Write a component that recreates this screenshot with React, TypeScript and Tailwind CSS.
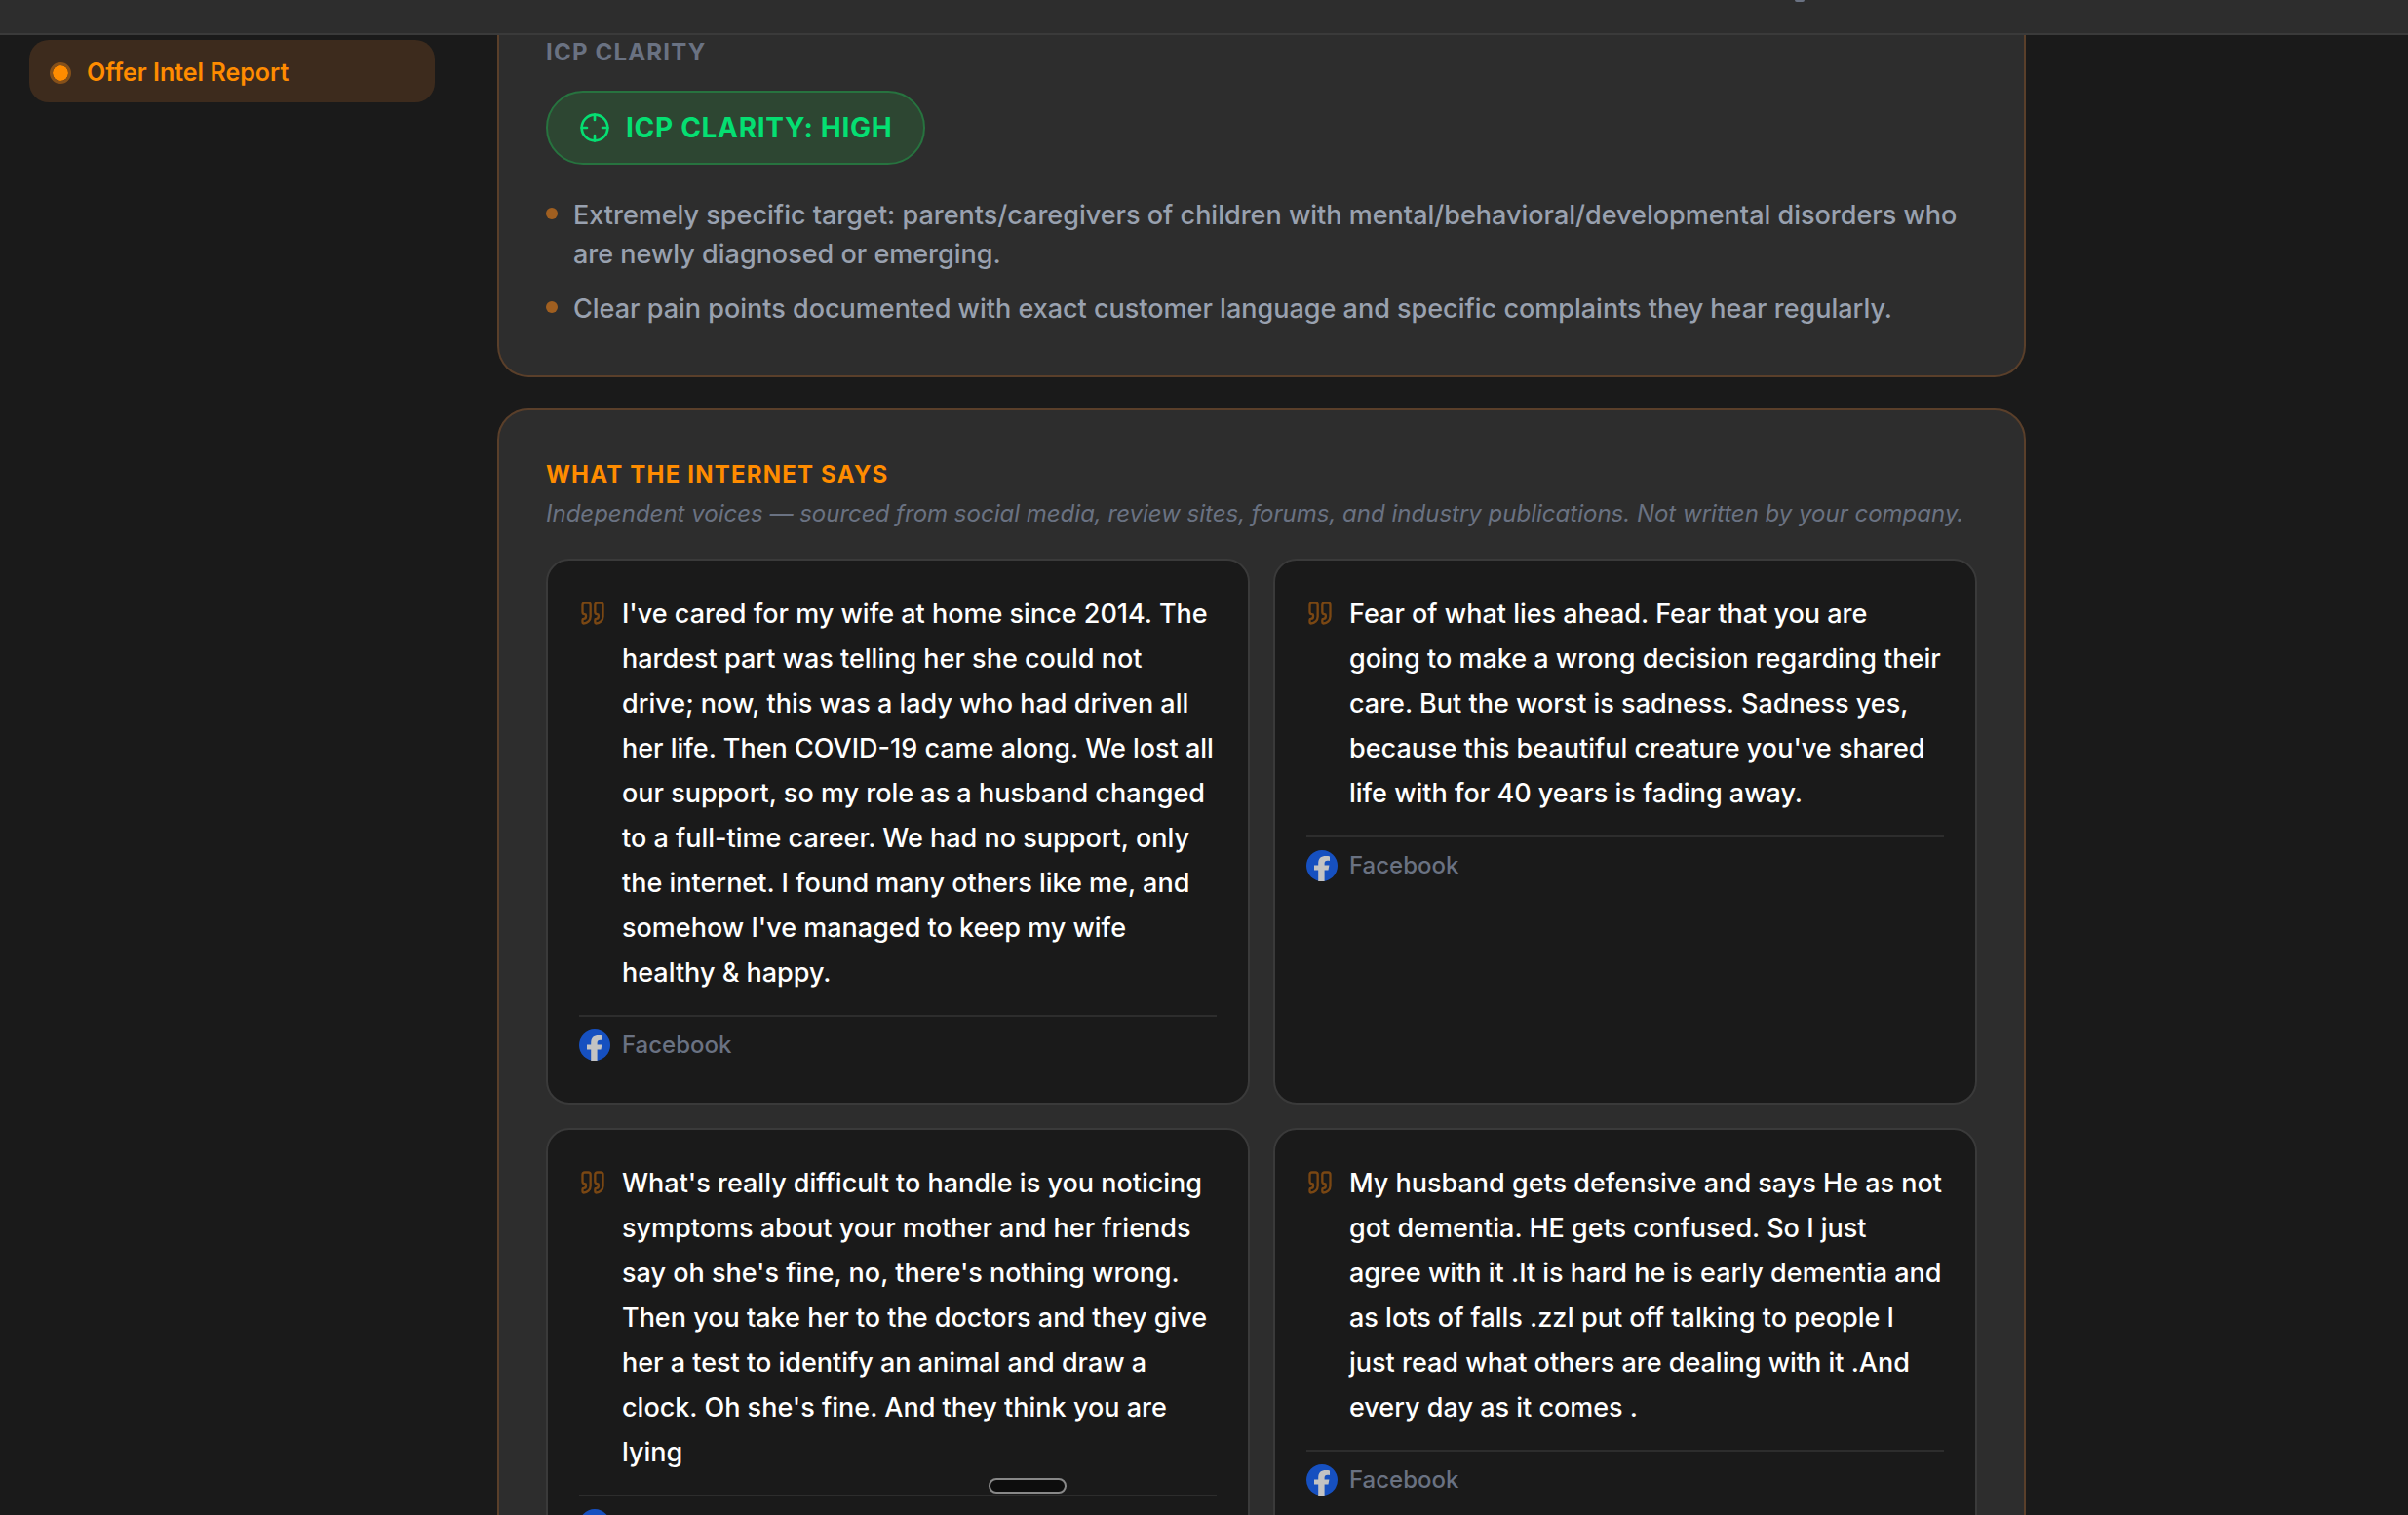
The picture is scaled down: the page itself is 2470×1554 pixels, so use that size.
import React from 'react'
import { Crosshair, Quote } from 'lucide-react'

interface Voice { lines: string[]; source: string }

const clarityPoints = [
  'Extremely specific target: parents/caregivers of children with mental/behavioral/developmental disorders who are newly diagnosed or emerging.',
  'Clear pain points documented with exact customer language and specific complaints they hear regularly.',
]

const voices: Voice[] = [
  {
    lines: [
      "I've cared for my wife at home since 2014. The",
      'hardest part was telling her she could not',
      'drive; now, this was a lady who had driven all',
      'her life. Then COVID-19 came along. We lost all',
      'our support, so my role as a husband changed',
      'to a full-time career. We had no support, only',
      'the internet. I found many others like me, and',
      "somehow I've managed to keep my wife",
      'healthy & happy.',
    ],
    source: 'Facebook',
  },
  {
    lines: [
      'Fear of what lies ahead. Fear that you are',
      'going to make a wrong decision regarding their',
      'care. But the worst is sadness. Sadness yes,',
      "because this beautiful creature you've shared",
      'life with for 40 years is fading away.',
    ],
    source: 'Facebook',
  },
  {
    lines: [
      "What's really difficult to handle is you noticing",
      'symptoms about your mother and her friends',
      "say oh she's fine, no, there's nothing wrong.",
      'Then you take her to the doctors and they give',
      'her a test to identify an animal and draw a',
      "clock. Oh she's fine. And they think you are",
      'lying',
    ],
    source: 'Facebook',
  },
  {
    lines: [
      'My husband gets defensive and says He as not',
      'got dementia. HE gets confused. So I just',
      'agree with it .It is hard he is early dementia and',
      'as lots of falls .zzI put off talking to people I',
      'just read what others are dealing with it .And',
      'every day as it comes .',
    ],
    source: 'Facebook',
  },
]

function FacebookLogo() {
  return (
    <svg viewBox="0 0 32 32" className="size-8 shrink-0" aria-hidden="true">
      <circle cx="16" cy="16" r="16" fill="#1650c0" />
      <path
        d="M12.2 32V20.4H8V15.4h4.2v-1.6c0-5.4 2.6-7.8 8-7.8 1.4 0 2.9.1 3.8.4v4.5c-.5-.1-1.3-.1-2.2-.1-2.4 0-3.2.9-3.2 3v1.6h4.8l-.9 5h-3.9V32z"
        fill="#c3c3c3"
      />
    </svg>
  )
}

function VoiceCard({ voice }: { voice: Voice }) {
  return (
    <article className="rounded-3xl border-2 border-[#3a3a3a] bg-[#1a1a1a] p-8">
      <div className="flex items-start gap-4">
        <Quote className="mt-2 size-7 shrink-0 text-[#7a4713]" />
        <p className="min-w-0 flex-1 whitespace-pre text-[27px] font-medium leading-[46px] text-white">{voice.lines.join('\n')}</p>
      </div>
      <div className="mt-5 flex h-[58px] items-center gap-3 border-t-2 border-[#2d2d2d] pt-[2px]">
        <FacebookLogo />
        <span className="text-2xl font-medium text-[#6a7282]">{voice.source}</span>
      </div>
    </article>
  )
}

export default function App() {
  return (
    <div className="relative flex h-screen flex-col overflow-hidden bg-[#1a1a1a] font-['Inter',sans-serif]">
      <header className="flex h-9 shrink-0 items-start border-b-2 border-[#3a3a3a] bg-[#2d2d2d] pl-[1841px]">
        <span className="h-[2px] w-[10px] rounded-b-full bg-[#6a7282]" />
      </header>

      <div className="flex min-h-0 flex-1 gap-16 overflow-hidden px-[30px]">
        <aside className="w-[416px] shrink-0 pt-[5px]">
          <nav>
            <a href="#offer-intel" className="flex h-16 items-center gap-4 rounded-[20px] bg-[#3d2b1d] pl-[21px] pt-[3px] text-[25px] font-semibold text-[#ff8c00]">
              <span className="size-[22px] rounded-full border-3 border-[#85501a] bg-[#ff8c00] bg-clip-padding" />
              Offer Intel Report
            </a>
          </nav>
        </aside>

        <main className="max-w-[1568px] flex-1 space-y-8">
          <section className="rounded-b-[32px] border-x-2 border-b-2 border-[#5a3f2a] bg-[#2d2d2d] px-12 pb-12 pt-[2px]">
            <h3 className="text-2xl font-bold tracking-wider text-[#6a7282]">ICP CLARITY</h3>
            <div className="mt-[23px] flex h-[76px] w-fit items-center gap-4 rounded-full border-2 border-[#27733f] bg-[#2d4632] px-8 text-[28px] font-bold tracking-wide text-[#05df72]">
              <Crosshair className="size-8" />
              ICP CLARITY: HIGH
            </div>
            <ul className="mt-8 space-y-4">
              {clarityPoints.map(point => (
                <li key={point} className="flex items-start gap-4 text-[27px] font-medium leading-10 text-[#99a1af]">
                  <span className="mt-3 size-3 shrink-0 rounded-full bg-[#a05f20]" />
                  {point}
                </li>
              ))}
            </ul>
          </section>

          <section className="rounded-[32px] border-2 border-[#5a3f2a] bg-[#2d2d2d] px-12 pb-12 pt-[50px]">
            <h2 className="text-2xl font-bold tracking-wider text-[#ff8c00]">WHAT THE INTERNET SAYS</h2>
            <p className="mt-2 text-2xl italic text-[#6a7282]">
              Independent voices — sourced from social media, review sites, forums, and industry publications. Not written by your company.
            </p>
            <div className="mt-[30px] grid grid-cols-2 gap-6">
              {voices.map(voice => <VoiceCard key={voice.lines[0]} voice={voice} />)}
            </div>
          </section>
        </main>
      </div>

      {/* floating handle */}
      <div className="absolute bottom-[22px] left-[1014px] h-4 w-20 rounded-full border-2 border-[#888888] bg-[#0d0d0d]" />
    </div>
  )
}
